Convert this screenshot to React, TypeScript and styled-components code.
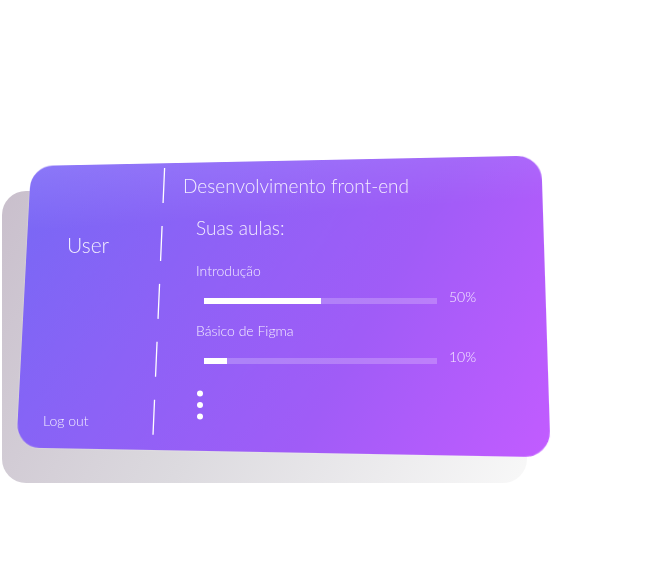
import React from "react";
import styled, { createGlobalStyle } from "styled-components";

const GlobalStyle = createGlobalStyle`
  *, *::before, *::after { box-sizing: border-box; }
  body {
    margin: 0;
    background: #fff;
    color: rgba(255, 255, 255, 0.88);
    font-family: Lato, "Open Sans", sans-serif;
    font-weight: 300;
  }
`;

const Page = styled.main`
  min-height: 100vh;
  padding: 166px 31px 80px;
`;

const Card = styled.section`
  position: relative;
  isolation: isolate;
  display: grid;
  grid-template-columns: 116px 24px 1fr;
  max-width: 525px;
  min-height: 292px;

  /* flat grey plate behind the panel */
  &::before {
    content: "";
    position: absolute;
    z-index: -2;
    inset: 25px 29px -25px -29px;
    border-radius: 24px;
    background: linear-gradient(119deg, #c9bfcc 0%, #dcdadf 48%, #f8f8f8 100%);
  }

  /* tilted panel seen in perspective */
  &::after {
    content: "";
    position: absolute;
    z-index: -1;
    inset: 0;
    border-radius: 24px;
    background:
      linear-gradient(177deg, rgba(180, 155, 255, 0.3) 0%, rgba(180, 150, 255, 0) 22%),
      linear-gradient(119deg, #7868f5 0%, #a05cf7 65%, #c25cff 100%);
    box-shadow: 0 0 2px rgba(255, 255, 255, 0.4);
    will-change: transform;
    transform-origin: 0 0;
    transform: matrix3d(
      0.90783, -0.018684, 0, -0.00012539,
      -0.04812, 0.92151, 0, -0.00015107,
      0, 0, 1, 0,
      0, 0, 0, 1
    );
  }
`;

const Sidebar = styled.aside`
  display: flex;
  flex-direction: column;
  justify-content: space-between;
  padding: 66px 0 27px 12px;
`;

const UserName = styled.h2`
  margin: 0;
  padding-left: 24px;
  font-size: 21px;
  line-height: 26px;
  font-weight: 300;
`;

const PlainButton = styled.button`
  align-self: flex-start;
  padding: 0;
  border: 0;
  background: none;
  color: inherit;
  font: inherit;
  font-size: 14px;
  line-height: 20px;
  cursor: pointer;
`;

const Divider = styled.svg`
  display: block;
  width: 24px;
  height: 292px;
`;

const Content = styled.div`
  display: flex;
  flex-direction: column;
  padding: 8px 0 0 12px;
`;

const Title = styled.h1`
  margin: 0;
  font-size: 19px;
  line-height: 24px;
  font-weight: 300;
`;

const Lessons = styled.section`
  display: flex;
  flex-direction: column;
  padding: 18px 0 0 13px;
`;

const Subtitle = styled.h2`
  margin: 0 0 21px;
  font-size: 19px;
  line-height: 24px;
  font-weight: 300;
`;

const Lesson = styled.div`
  height: 60px;
  font-size: 14px;
`;

const LessonName = styled.label`
  display: block;
  line-height: 20px;
`;

const Track = styled.div`
  display: flex;
  align-items: center;
  gap: 12px;
  padding: 6px 0 0 8px;
  line-height: 20px;
`;

const Bar = styled.progress`
  appearance: none;
  display: block;
  flex: 0 1 233px;
  min-width: 0;
  height: 6px;
  margin-top: 8px;
  border: 0;
  background: rgba(255, 255, 255, 0.22);

  &::-webkit-progress-bar { background: transparent; }
  &::-webkit-progress-value { background: #fff; }
  &::-moz-progress-bar { background: #fff; }
`;

const MoreButton = styled(PlainButton)`
  margin-top: 8px;
  line-height: 0;
`;

const lessons = [
  { id: "intro", name: "Introdução", value: 50 },
  { id: "figma", name: "Básico de Figma", value: 10 },
];

export default function App() {
  return (
    <>
      <GlobalStyle />
      <Page>
        <Card>
          <Sidebar>
            <UserName>User</UserName>
            <PlainButton type="button">Log out</PlainButton>
          </Sidebar>
          <Divider viewBox="0 0 24 292" aria-hidden="true">
            <line x1="17.6" y1="2" x2="6" y2="269" stroke="#fff" strokeWidth="1.3" strokeDasharray="35 23" />
          </Divider>
          <Content>
            <Title>Desenvolvimento front-end</Title>
            <Lessons>
              <Subtitle>Suas aulas:</Subtitle>
              {lessons.map((lesson) => (
                <Lesson key={lesson.id}>
                  <LessonName htmlFor={lesson.id}>{lesson.name}</LessonName>
                  <Track>
                    <Bar id={lesson.id} max={100} value={lesson.value} />
                    <span>{lesson.value}%</span>
                  </Track>
                </Lesson>
              ))}
              <MoreButton type="button" aria-label="Mais aulas">
                <svg width="8" height="32" viewBox="0 0 8 32" fill="#fff" aria-hidden="true">
                  <circle cx="4" cy="4.5" r="3" />
                  <circle cx="4" cy="16" r="3" />
                  <circle cx="4" cy="27.5" r="3" />
                </svg>
              </MoreButton>
            </Lessons>
          </Content>
        </Card>
      </Page>
    </>
  );
}
